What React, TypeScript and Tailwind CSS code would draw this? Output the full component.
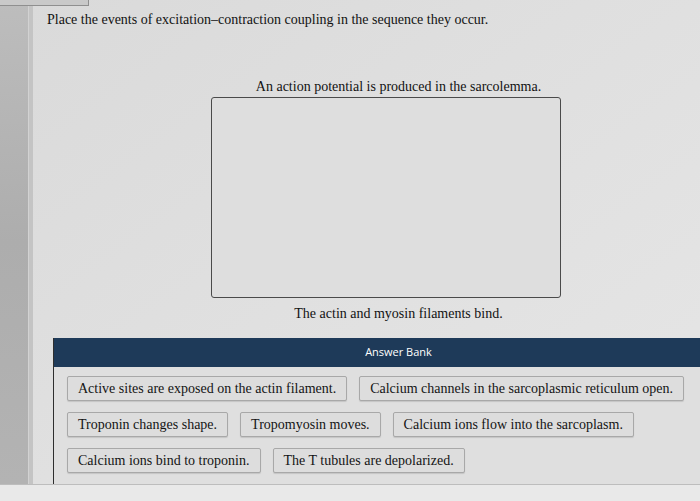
const answers: string[][] = [
  [
    "Active sites are exposed on the actin filament.",
    "Calcium channels in the sarcoplasmic reticulum open.",
  ],
  [
    "Troponin changes shape.",
    "Tropomyosin moves.",
    "Calcium ions flow into the sarcoplasm.",
  ],
  ["Calcium ions bind to troponin.", "The T tubules are depolarized."],
];

function AnswerChip({ label }: { label: string }) {
  return (
    <div className="h-[25px] shrink-0 whitespace-nowrap rounded-[2px] border border-[#a8a8a8] bg-[#dddddd] px-[10px] text-[14px] leading-[23px] text-[#141414] shadow-[0_1px_1px_rgba(0,0,0,0.12)]">
      {label}
    </div>
  );
}

export default function App() {
  return (
    <div
      className="relative h-[501px] w-[700px] overflow-hidden bg-[#e2e2e2] text-[#121212]"
      style={{ fontFamily: '"Liberation Serif", "Times New Roman", serif' }}
    >
      <div className="flex h-[484px]">
        {/* side rail */}
        <div className="w-[28px] shrink-0 bg-gradient-to-b from-[#bdbdbd] via-[#adadad] to-[#b3b3b3]" />
        <div className="w-[5px] shrink-0 border-l border-[#d2d2d2] bg-[#c4c4c4]" />

        <main className="flex min-w-0 flex-1 flex-col bg-gradient-to-br from-[#dadada] via-[#e0e0e0] to-[#e6e6e6]">
          <p className="whitespace-nowrap pl-[14px] pt-[12px] text-[14px] leading-[16px]">
            Place the events of excitation–contraction coupling in the sequence they occur.
          </p>

          <div className="mt-[51px] pl-[64px] text-center text-[14px] leading-[16px]">
            An action potential is produced in the sarcolemma.
          </div>

          <div className="mt-[2px] pl-[178px]">
            <div className="h-[201px] w-[350px] rounded-[3px] border-[1.5px] border-[#4a4a4a] bg-[#dedede]" />
          </div>

          <div className="mt-[8px] pl-[64px] text-center text-[14px] leading-[16px]">
            The actin and myosin filaments bind.
          </div>

          {/* answer bank */}
          <section className="ml-[20px] mt-[16px] flex w-[690px] flex-1 shrink-0 flex-col border-l border-[#2e2e2e]">
            <div
              className="flex h-[29px] items-center justify-center bg-[#1e3a59] text-[11px] text-white"
              style={{ fontFamily: '"Open Sans", "Liberation Sans", sans-serif' }}
            >
              Answer Bank
            </div>
            <div className="flex flex-1 flex-col gap-[11px] bg-[#dfdfdf] pl-[13px] pt-[9px]">
              {answers.map((row, i) => (
                <div key={i} className="flex gap-[12px]">
                  {row.map((a) => (
                    <AnswerChip key={a} label={a} />
                  ))}
                </div>
              ))}
            </div>
          </section>
        </main>
      </div>

      <div className="h-[17px] border-t border-[#bdbdbd] bg-[#e9e9e9]" />

      {/* bit of a tab peeking in at the top-left */}
      <div className="absolute left-0 top-0 h-[6px] w-[89px] border-b border-r border-[#8f8f8f] bg-[#c9c9c9]" />
    </div>
  );
}
